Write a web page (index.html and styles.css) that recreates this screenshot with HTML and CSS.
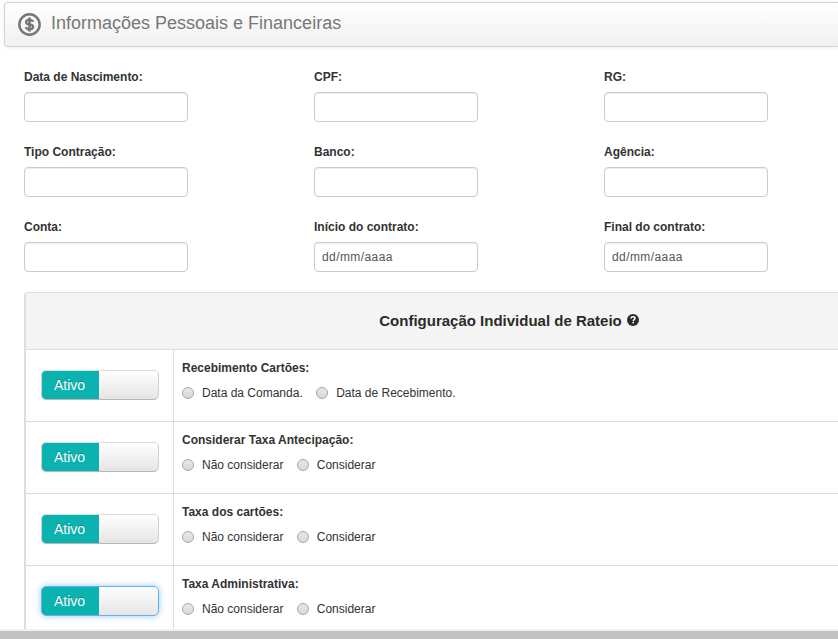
FILE: index.html
```html
<!DOCTYPE html>
<html lang="pt-BR">
<head>
<meta charset="utf-8">
<title>Informações Pessoais e Financeiras</title>
<link rel="stylesheet" href="styles.css">
</head>
<body>
<main class="page">
  <header class="panel-heading">
    <svg class="coin" viewBox="0 0 24 24" aria-hidden="true">
      <circle cx="12" cy="12" r="10.6" fill="none" stroke="#777" stroke-width="2.6"/>
      <path d="M15.6 9.2C15.2 7.8 13.8 7.2 12 7.2C9.8 7.2 8.4 8.1 8.4 9.6C8.4 11.2 10 11.6 12 12C14.2 12.4 15.8 13 15.8 14.6C15.8 16.1 14.2 16.9 12 16.9C9.9 16.9 8.6 16.2 8.1 14.7" fill="none" stroke="#777" stroke-width="2.4"/>
      <path d="M12 4.6V19.4" stroke="#777" stroke-width="2.6"/>
    </svg>
    <h1>Informações Pessoais e Financeiras</h1>
  </header>

  <form class="fields">
    <label class="field"><span>Data de Nascimento:</span><input type="text"></label>
    <label class="field"><span>CPF:</span><input type="text"></label>
    <label class="field"><span>RG:</span><input type="text"></label>
    <label class="field"><span>Tipo Contração:</span><input type="text"></label>
    <label class="field"><span>Banco:</span><input type="text"></label>
    <label class="field"><span>Agência:</span><input type="text"></label>
    <label class="field"><span>Conta:</span><input type="text"></label>
    <label class="field"><span>Início do contrato:</span><input type="text" placeholder="dd/mm/aaaa"></label>
    <label class="field"><span>Final do contrato:</span><input type="text" placeholder="dd/mm/aaaa"></label>
  </form>

  <section class="config">
    <div class="config-title">
      <h2>Configuração Individual de Rateio</h2>
      <svg class="help" viewBox="0 0 12 12" aria-hidden="true">
        <circle cx="6" cy="6" r="6" fill="#2b2b2b"/>
        <path d="M4.1 4.6C4.1 3.3 4.9 2.7 6 2.7C7.2 2.7 8 3.4 8 4.3C8 5.6 6.2 5.5 6.2 7" fill="none" stroke="#fff" stroke-width="1.5"/>
        <rect x="5.4" y="7.8" width="1.6" height="1.5" fill="#fff"/>
      </svg>
    </div>
    <div class="row">
      <div class="cell-switch"><div class="switch"><span class="on">Ativo</span></div></div>
      <div class="cell-options">
        <strong>Recebimento Cartões:</strong>
        <div class="options">
          <label><i class="radio"></i>Data da Comanda.</label>
          <label><i class="radio"></i>Data de Recebimento.</label>
        </div>
      </div>
    </div>
    <div class="row">
      <div class="cell-switch"><div class="switch"><span class="on">Ativo</span></div></div>
      <div class="cell-options">
        <strong>Considerar Taxa Antecipação:</strong>
        <div class="options">
          <label><i class="radio"></i>Não considerar</label>
          <label><i class="radio"></i>Considerar</label>
        </div>
      </div>
    </div>
    <div class="row">
      <div class="cell-switch"><div class="switch"><span class="on">Ativo</span></div></div>
      <div class="cell-options">
        <strong>Taxa dos cartões:</strong>
        <div class="options">
          <label><i class="radio"></i>Não considerar</label>
          <label><i class="radio"></i>Considerar</label>
        </div>
      </div>
    </div>
    <div class="row">
      <div class="cell-switch"><div class="switch focused"><span class="on">Ativo</span></div></div>
      <div class="cell-options">
        <strong>Taxa Administrativa:</strong>
        <div class="options">
          <label><i class="radio"></i>Não considerar</label>
          <label><i class="radio"></i>Considerar</label>
        </div>
      </div>
    </div>
  </section>
</main>
<footer class="scrollbar"></footer>
</body>
</html>
```
FILE: styles.css
```css
* { box-sizing: border-box; }
body {
  margin: 0;
  height: 639px;
  display: flex;
  flex-direction: column;
  overflow: hidden;
  background: #fff;
  color: #333;
  font: 12px/20px "Liberation Sans", Arial, sans-serif;
}
.page { height: 629px; overflow: hidden; padding: 2px 0 0 4px; }
.panel-heading {
  display: flex;
  align-items: flex-start;
  height: 45px;
  padding: 10px 13px 0;
  border: 1px solid #d4d4d4;
  border-right: 0;
  border-radius: 4px 0 0 4px;
  background: linear-gradient(#fff, #f0f0f0);
  box-shadow: 0 1px 4px rgba(0, 0, 0, .07);
}
.coin { width: 23px; height: 23px; flex: none; }
h1 {
  margin: 0 0 0 10px;
  font-size: 18px;
  font-weight: 400;
  line-height: 20px;
  color: #777;
  white-space: nowrap;
}
.fields {
  display: grid;
  grid-template-columns: repeat(3, 290px);
  grid-auto-rows: 75px;
  margin: 20px 0 0 20px;
}
.field span { display: block; margin-bottom: 5px; font-weight: 700; }
.field input {
  display: block;
  width: 164px;
  height: 30px;
  padding: 4px 7px;
  border: 1px solid #ccc;
  border-radius: 4px;
  box-shadow: inset 0 1px 1px rgba(0, 0, 0, .075);
  font: inherit;
  letter-spacing: .42px;
  color: #555;
}
.field input::placeholder { color: #555; opacity: 1; }
.config {
  margin-left: 20px;
  border: 1px solid #ddd;
  border-left-width: 2px;
  border-right: 0;
  border-radius: 4px 0 0 0;
  overflow: hidden;
}
.config-title {
  display: flex;
  justify-content: center;
  align-items: center;
  gap: 5px;
  width: 966px;
  height: 56px;
  background: #f4f4f4;
}
h2 { margin: 0; font-size: 15px; line-height: 20px; white-space: nowrap; color: #2b2b2b; }
.help { width: 12px; height: 12px; margin-top: -2px; }
.row { display: flex; height: 72px; border-top: 1px solid #ddd; }
.cell-switch { width: 147px; flex: none; padding: 20px 0 0 15px; }
.switch {
  display: flex;
  width: 118px;
  height: 30px;
  border: 1px solid #ccc;
  border-color: #ddd #d0d0d0 #b8b8b8;
  border-radius: 5px;
  background: linear-gradient(#fff, #e5e5e5);
  overflow: hidden;
}
.focused { border-color: #66afe9; box-shadow: 0 0 6px rgba(82, 168, 236, .6); }
.on {
  width: 57px;
  padding-right: 2px;
  background: #0ab3b0;
  color: #fff;
  font-size: 14px;
  line-height: 29px;
  text-align: center;
  text-shadow: 0 -1px 0 rgba(0, 0, 0, .25);
}
.cell-options { flex: 1; padding: 8px 0 0 8px; border-left: 1px solid #ddd; }
.cell-options strong { display: block; }
.options { display: flex; gap: 13.4px; margin-top: 5px; }
.options label { display: flex; align-items: center; white-space: nowrap; }
.radio {
  width: 12px;
  height: 12px;
  margin-right: 8px;
  border: 1px solid #a6a6a6;
  border-radius: 50%;
  background: linear-gradient(#e8e8e8, #d8d8d8);
}
.scrollbar { height: 10px; flex: none; background: #c1c1c1; border-top: 2px solid #f0f0f0; }
```
